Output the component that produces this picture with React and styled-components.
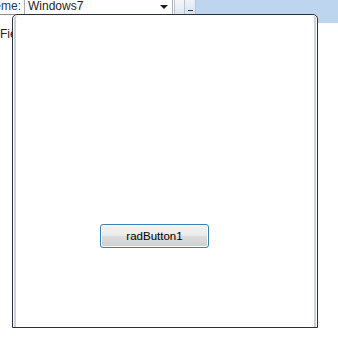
import React from 'react';
import styled, { createGlobalStyle } from 'styled-components';

const Global = createGlobalStyle`
    html, body {
        margin: 0;
        padding: 0;
        background: #ffffff;
        overflow: hidden;
    }
    body {
        font-family: "Liberation Sans", Arial, sans-serif;
    }
`

const Page = styled.div`
    position: relative;
    width: 338px;
    height: 339px;
    overflow: hidden;
    background: #ffffff;
`

const Toolbar = styled.div`
    display: flex;
    align-items: flex-start;
    height: 23px;
`

const Label = styled.div`
    box-sizing: border-box;
    width: 24px;
    height: 15px;
    padding-right: 3px;
    border-bottom: 1px solid #8e8f8f;
    font-size: 12px;
    line-height: 12px;
    color: #1e395b;
    white-space: nowrap;
    overflow: hidden;
    direction: rtl;
    text-align: left;
    span {
        direction: ltr;
        unicode-bidi: bidi-override;
    }
`

const Combo = styled.div`
    display: flex;
    align-items: center;
    justify-content: space-between;
    box-sizing: border-box;
    width: 149px;
    height: 15px;
    padding: 0 4px 2px 3px;
    border: 1px solid #abadb3;
    border-top: none;
    border-bottom-color: #8e8f8f;
    background: #ffffff;
    font-size: 12px;
    color: #1e1e1e;
`

const Arrow = styled.span`
    width: 0;
    height: 0;
    margin-top: 2px;
    border-left: 4px solid transparent;
    border-right: 4px solid transparent;
    border-top: 4px solid #1b1b1b;
`

const Grip = styled.div`
    box-sizing: border-box;
    width: 11px;
    height: 15px;
    margin-left: 1px;
    border-left: 1px solid #b8c4d2;
    border-right: 1px solid #b8c4d2;
    border-bottom: 1px solid #8e8f8f;
    background: linear-gradient(#f3f7fc, #dde7f2);
`

const MinButton = styled.div`
    display: flex;
    align-items: flex-end;
    justify-content: center;
    box-sizing: border-box;
    width: 11px;
    height: 15px;
    padding-bottom: 3px;
    border-right: 1px solid #b8c4d2;
    border-bottom: 1px solid #8e8f8f;
    background: linear-gradient(#eef3f9, #d6e2ef);
    &::after {
        content: "";
        width: 5px;
        height: 1px;
        background: #1e395b;
    }
`

const BluePanel = styled.div`
    flex: 1;
    height: 23px;
    background: #bdd5ee;
`

const FieldText = styled.div`
    margin-top: 4px;
    font-size: 12px;
    line-height: 14px;
    color: #1e1e1e;
`

const Window = styled.div`
    position: absolute;
    left: 12px;
    top: 14px;
    box-sizing: border-box;
    width: 306px;
    height: 314px;
    display: flex;
    padding: 1px 1px 0;
    border: 1px solid #2b2f36;
    border-radius: 5px 5px 0 0;
    background: #ffffff;
`

const Frame = styled.div`
    flex: 1;
    display: flex;
    flex-direction: column;
    align-items: flex-start;
    padding: 208px 0 0 84px;
    border-left: 2px solid #c9d1db;
    border-right: 2px solid #c9d1db;
    border-top-left-radius: 3px;
    border-top-right-radius: 3px;
    background: #ffffff;
`

const Button = styled.button`
    box-sizing: border-box;
    width: 109px;
    height: 24px;
    padding: 0;
    border: 1px solid #3c7fb1;
    border-radius: 3px;
    background: linear-gradient(#f2f2f2 0%, #ebebeb 50%, #dddddd 51%, #cfcfcf 100%);
    box-shadow: inset 0 0 0 1px #fcfcfc;
    font-family: "Liberation Sans", Arial, sans-serif;
    font-size: 11.5px;
    color: #000000;
`

export default function App() {
    return (
        <Page>
            <Global />
            <Toolbar>
                <Label><span>Theme:</span></Label>
                <Combo>
                    <span>Windows7</span>
                    <Arrow />
                </Combo>
                <Grip />
                <MinButton />
                <BluePanel />
            </Toolbar>
            <FieldText>Fie</FieldText>
            <Window>
                <Frame>
                    <Button>radButton1</Button>
                </Frame>
            </Window>
        </Page>
    );
}
